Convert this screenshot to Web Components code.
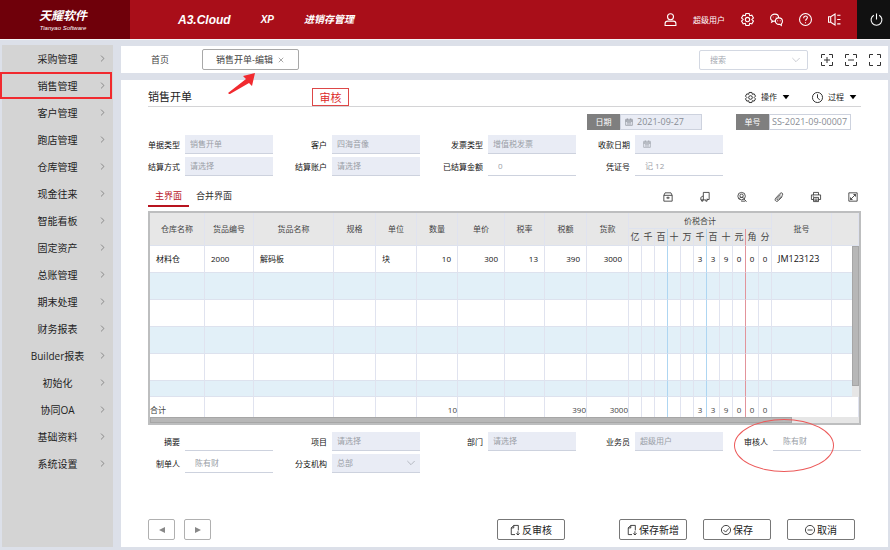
<!DOCTYPE html>
<html lang="zh-CN">
<head>
<meta charset="utf-8">
<title>销售开单</title>
<style>
  html, body {
    margin: 0;
    padding: 0;
  }

  body {
    background: #dce0e9;
    color: #222222;
    font-family: 'Open Sans', 'Noto Sans CJK SC', sans-serif;
    font-size: 8px;
    line-height: 12px;
  }
</style>
</head>
<body>
<erp-app></erp-app>

<script>
const ICONS = {
  user: '<circle cx="12" cy="7" r="5.5"/><path d="M2 23v-3c0-3 2-5 5-5h10c3 0 5 2 5 5v3z"/>',
  gear: '<path d="M9 1h6l1 4 4-1 3 5-3 3 3 3-3 5-4-1-1 4H9l-1-4-4 1-3-5 3-3-3-3 3-5 4 1z"/><circle cx="12" cy="12" r="4"/>',
  chat: '<path d="M16 9C16 5 13 2 9 2S1 5 1 9c0 2 1 4 3 5l-1 3 4-2h3"/><path d="M23 15c0-4-3-6-7-6s-6 3-6 6 3 6 6 6h2l3 2v-3c1-1 2-3 2-5z"/><path d="M6 7v1M11 7v1M14 14v1M19 14v1"/>',
  help: '<circle cx="12" cy="12" r="11"/><path d="M8.500 9.500c0-5 7-5 7-1 0 3-3.500 3-3.500 6M12 17v2"/>',
  horn: '<path d="M1 7h4l8-5v20l-8-5H1zM5 7v10M17 4h6M17 12h6M17 20h6"/>',
  power: '<path d="M7 4a10 10 0 1 0 10 0M12 1v11"/>',
  plusBox: '<path d="M1 8V1h7M16 1h7v7M23 16v7h-7M8 23H1v-7M6 12h12M12 6v12"/>',
  minusBox: '<path d="M1 8V1h7M16 1h7v7M23 16v7h-7M8 23H1v-7M6 12h12"/>',
  fullBox: '<path d="M1 8V1h7M16 1h7v7M23 16v7h-7M8 23H1v-7"/>',
  clock: '<circle cx="12" cy="12" r="11"/><path d="M12 5v8l5 4"/>',
  caret: '<path d="M2 6h20L12 19z" fill="currentColor" stroke="none"/>',
  right: '<path d="M7 2l10 10L7 22"/>',
  down: '<path d="M1 6l11 11L23 6"/>',
  close: '<path d="M3 3l18 18M21 3L3 21"/>',
  calendar: '<path d="M2 4h20v18H2zM2 8h20M2 10h20M7 1v5M17 1v5M6 14h12M6 18h12"/>',
  box: '<path d="M2 8h20v14H2zM2 8l3-6h14l3 6M8 14h8M12 11v6"/>',
  sheet: '<path d="M8 1h14v17h-5M8 1v8l-6 4v6h12M8 9v10M4 19v3h3v-3M14 19v3h3v-6"/>',
  search: '<circle cx="11" cy="10" r="9"/><circle cx="11" cy="9" r="4"/><path d="M5 16c2-4 10-4 12 0M17 17l6 6M10 22h10"/>',
  clip: '<path d="M20 11L10 21c-4 4-10-1-6-6L15 3c3-3 8 1 5 5L10 18c-2 2-4 0-3-2l9-10"/>',
  printer: '<path d="M6 7V1h12v6M6 18H1V7h22v11h-5M6 13h12v10H6zM8 17h8M8 20h8M4 10h3"/>',
  expand: '<path d="M2 2h20v20H2zM13 6h5v5M18 6L6 18M6 13v5h5"/>',
  addPage: '<path d="M12 23H3V7l6-6h11v12M9 1v6H3M19 15v9M15 20l4 4 4-4"/>',
  check: '<circle cx="12" cy="12" r="11"/><path d="M6 12l5 5 8-9"/>',
  minus: '<circle cx="12" cy="12" r="11"/><path d="M6 12h12"/>',
  prev: '<path d="M21 3v18L3 12z" fill="currentColor" stroke="none"/>',
  next: '<path d="M3 3v18l18-9z" fill="currentColor" stroke="none"/>'
};

// Shared base
// Clones markup into an open root
class ErpElement extends HTMLElement {
  constructor() {
    super();
    const template = document.createElement( 'template' );
    template.innerHTML = this.markup();
    this.attachShadow( {mode: 'open'} );
    this.shadowRoot.appendChild( template.content.cloneNode( true ) );
  }

  markup() {
    return '<slot></slot>';
  }
}

class ErpIcon extends ErpElement {
  markup() {
    return /* template */ `
      <style>
        :host {
          display: block;
          flex: none;
          height: var( --icon-size, 12px );
          width: var( --icon-size, 12px );
        }

        svg {
          display: block;
          fill: none;
          height: 100%;
          overflow: visible;
          stroke: currentColor;
          stroke-width: 2;
          width: 100%;
        }
      </style>
      <svg viewBox="0 0 24 24" aria-hidden="true"></svg>
    `;
  }

  connectedCallback() {
    this.shadowRoot.querySelector( 'svg' ).innerHTML = ICONS[this.getAttribute( 'name' )] || '';
  }
}

class ErpHeader extends ErpElement {
  markup() {
    return /* template */ `
      <style>
        :host {
          background: #a90e19;
          border-bottom: solid 1px #f4f4f6;
          color: #ffffff;
          display: flex;
          height: 39px;
        }

        .logo {
          align-items: center;
          background: #6f000a;
          box-sizing: border-box;
          display: flex;
          flex: none;
          flex-direction: column;
          font-style: italic;
          justify-content: center;
          padding-right: 4px;
          width: 130px;
        }

        .logo strong {
          font-size: 12px;
          line-height: 16px;
        }

        .logo small {
          font-family: 'Liberation Sans', sans-serif;
          font-size: 6px;
          line-height: 8px;
        }

        nav {
          align-items: center;
          display: flex;
          flex: 1;
          font-family: 'Liberation Sans', 'Noto Sans CJK SC', sans-serif;
          gap: 30px;
          padding-left: 48px;
        }

        a {
          color: inherit;
          font-size: 10px;
          font-style: italic;
          font-weight: 700;
          text-decoration: none;
        }

        a.brand {
          font-size: 12px;
        }

        .tools {
          --icon-size: 13px;
          align-items: center;
          display: flex;
          gap: 16px;
        }

        button {
          background: none;
          border: none;
          color: inherit;
          padding: 0;
        }

        .power {
          align-items: center;
          background: #111111;
          box-sizing: border-box;
          display: flex;
          height: 39px;
          justify-content: center;
          padding-left: 6px;
          width: 33px;
        }
      </style>
      <div class="logo"><strong>天耀软件</strong><small>Tianyao Software</small></div>
      <nav>
        <a class="brand" href="#">A3.Cloud</a>
        <a href="#">XP</a>
        <a href="#">进销存管理</a>
      </nav>
      <div class="tools">
        <erp-icon name="user"></erp-icon>
        <span>超级用户</span>
        <button aria-label="设置"><erp-icon name="gear"></erp-icon></button>
        <button aria-label="消息"><erp-icon name="chat"></erp-icon></button>
        <button aria-label="帮助"><erp-icon name="help"></erp-icon></button>
        <button aria-label="公告"><erp-icon name="horn"></erp-icon></button>
        <button class="power" aria-label="退出"><erp-icon name="power"></erp-icon></button>
      </div>
    `;
  }
}

class ErpMenu extends ErpElement {
  markup() {
    const items = [
      '采购管理', '销售管理', '客户管理', '跑店管理', '仓库管理', '现金往来', '智能看板', '固定资产',
      '总账管理', '期末处理', '财务报表', 'Builder报表', '初始化', '协同OA', '基础资料', '系统设置'
    ];

    return /* template */ `
      <style>
        :host {
          background: #d4d4d4;
          display: block;
          flex: none;
          width: 111px;
        }

        a {
          align-items: center;
          color: #222222;
          display: flex;
          font-size: 10px;
          height: 27px;
          position: relative;
          text-decoration: none;
        }

        span {
          flex: 1;
          padding-left: 14px;
          text-align: center;
        }

        erp-icon {
          --icon-size: 7px;
          color: #555555;
          margin-right: 7px;
        }

        /* Hand-drawn style marker round the current module */
        a.marked::after {
          border: solid 2px #f12a2f;
          content: '';
          inset: 0 1px 0 -2px;
          position: absolute;
        }
      </style>
      <nav>
        ${items.map( ( item ) => `<a href="#"${item === '销售管理' ? ' class="marked"' : ''}><span>${item}</span><erp-icon name="right"></erp-icon></a>` ).join( '' )}
      </nav>
    `;
  }
}

class ErpTabs extends ErpElement {
  markup() {
    return /* template */ `
      <style>
        :host {
          align-items: center;
          background: #ffffff;
          box-sizing: border-box;
          color: #444444;
          display: flex;
          font-size: 9px;
          height: 27px;
          padding: 0 7px 0 30px;
        }

        a {
          color: inherit;
          text-decoration: none;
        }

        .tab {
          align-items: center;
          border: solid 1px #a8a8a8;
          border-radius: 2px;
          box-sizing: border-box;
          display: flex;
          gap: 5px;
          height: 21px;
          margin-left: 33px;
          padding: 0 14px 0 13px;
          position: relative;
        }

        button {
          --icon-size: 6px;
          background: none;
          border: none;
          color: #555555;
          padding: 0;
        }

        .arrow {
          fill: #f12a2f;
          height: 22px;
          left: 25px;
          position: absolute;
          top: 22px;
          width: 28px;
        }

        .search {
          align-items: center;
          border: solid 1px #d3d8e2;
          border-radius: 2px;
          box-sizing: border-box;
          color: #b0b4bc;
          display: flex;
          height: 20px;
          margin: 0 13px 0 auto;
          padding: 0 7px 0 10px;
          width: 109px;
        }

        .search erp-icon {
          --icon-size: 8px;
        }

        input {
          background: none;
          border: none;
          color: #777777;
          flex: 1;
          font: inherit;
          font-size: 8px;
          min-width: 0;
          padding: 0;
        }

        input::placeholder {
          color: #a4a8b0;
        }

        .view {
          color: #333333;
          display: flex;
          gap: 12px;
        }

        .view button {
          --icon-size: 12px;
          color: inherit;
        }
      </style>
      <a href="#">首页</a>
      <div class="tab">
        <a href="#">销售开单-编辑</a>
        <button aria-label="关闭"><erp-icon name="close"></erp-icon></button>
        <svg class="arrow" viewBox="0 0 28 22" aria-hidden="true"><path d="M27 1L15 4l3 3L0 21c1 1 1 1 2 1l19-11 3 3z"/></svg>
      </div>
      <div class="search"><input placeholder="搜索" aria-label="搜索"><erp-icon name="down"></erp-icon></div>
      <div class="view">
        <button aria-label="放大"><erp-icon name="plusBox"></erp-icon></button>
        <button aria-label="缩小"><erp-icon name="minusBox"></erp-icon></button>
        <button aria-label="全屏"><erp-icon name="fullBox"></erp-icon></button>
      </div>
    `;
  }
}

// label, value, hint: texts
// plain: white box with underline only
// tag: grey label block with full border
// icon: leading glyph
// choice: drop-down
class ErpField extends ErpElement {
  markup() {
    return /* template */ `
      <style>
        :host {
          align-items: center;
          display: flex;
          justify-content: flex-end;
        }

        label {
          color: #111111;
          padding-right: 5px;
          white-space: nowrap;
        }

        .box {
          align-items: center;
          background: #e9ecf5;
          border-bottom: solid 1px #cdd2de;
          box-sizing: border-box;
          color: #9a9ea6;
          display: flex;
          flex: none;
          gap: 4px;
          height: 19px;
          padding: 0 5px;
          width: 88px;
        }

        .box erp-icon {
          --icon-size: 8px;
        }

        input, select {
          appearance: none;
          background: none;
          border: none;
          color: inherit;
          flex: 1;
          font: inherit;
          margin: 0;
          min-width: 0;
          opacity: 1;
          outline: none;
          padding: 0;
        }

        input::placeholder {
          color: inherit;
        }

        :host( [plain] ) .box {
          background: #ffffff;
          padding: 0 10px;
        }

        :host( [icon] ) .box {
          padding-left: 8px;
        }

        :host( [tag] ) label {
          background: #7f7f7f;
          color: #ffffff;
          line-height: 16px;
          padding: 0;
          text-align: center;
          width: 33px;
        }

        :host( [tag] ) .box {
          border: solid 1px #cdd2de;
          color: #888c94;
          font-size: 9px;
          height: 16px;
          padding: 0 4px;
          width: 82px;
        }

        :host( [tag][plain] ) .box {
          padding: 0 2px;
        }
      </style>
      <label for="control"></label>
      <div class="box"></div>
    `;
  }

  connectedCallback() {
    const value = this.getAttribute( 'value' ) || '';
    const hint = this.getAttribute( 'hint' ) || '';
    const icon = this.getAttribute( 'icon' );
    const box = this.shadowRoot.querySelector( '.box' );

    this.shadowRoot.querySelector( 'label' ).textContent = this.getAttribute( 'label' );

    if( this.hasAttribute( 'choice' ) ) {
      box.innerHTML = `<select id="control"><option>${value}</option></select><erp-icon name="down"></erp-icon>`;
    } else {
      box.innerHTML = `${icon ? `<erp-icon name="${icon}"></erp-icon>` : ''}<input id="control" value="${value}" placeholder="${hint}">`;
    }
  }
}

class ErpButton extends ErpElement {
  markup() {
    return /* template */ `
      <style>
        :host {
          display: block;
        }

        button {
          --icon-size: 10px;
          align-items: center;
          background: #ffffff;
          border: solid 1px #777777;
          border-radius: 2px;
          color: #222222;
          display: flex;
          font: inherit;
          font-size: 10px;
          gap: 2px;
          height: 21px;
          justify-content: center;
          padding: 0;
          width: 68px;
        }

        :host( [small] ) button {
          --icon-size: 8px;
          border-color: #b0b0b0;
          color: #888888;
          width: 27px;
        }
      </style>
      <button><slot></slot></button>
    `;
  }
}

class ErpGrid extends ErpElement {
  markup() {
    const widths = [55, 49, 80, 42, 41, 41, 47, 40, 42, 42];
    const heads = ['仓库名称', '货品编号', '货品名称', '规格', '单位', '数量', '单价', '税率', '税额', '货款'];
    const units = ['亿', '千', '百', '十', '万', '千', '百', '十', '元', '角', '分'];
    const amount = ['', '', '', '', '', '3', '3', '9', '0', '0', '0'];

    // Amount cells carry the ruled colours of a ledger
    const rule = ( index ) => index === 2 || index === 5 ? 'digit blue' : index === 8 ? 'digit red' : 'digit';
    const digits = ( values, tag = 'td' ) => values.map( ( value, index ) => `<${tag} class="${rule( index )}">${value}</${tag}>` ).join( '' );
    const row = ( values, sums, lot ) => `<tr>${values.map( ( value, index ) => `<td${index > 4 ? ' class="num"' : ''}>${value}</td>` ).join( '' )}${digits( sums )}<td class="lot">${lot}</td><td></td></tr>`;
    const blank = row( Array( 10 ).fill( '' ), Array( 11 ).fill( '' ), '' );

    return /* template */ `
      <style>
        :host {
          border: solid 2px #bdbebf;
          display: block;
          position: relative;
        }

        table {
          border-collapse: separate;
          border-spacing: 0;
          table-layout: fixed;
          width: 100%;
        }

        th, td {
          border-bottom: solid 1px #dde2ee;
          border-right: solid 1px #e0e3ef;
          box-sizing: border-box;
          font-weight: 400;
          padding: 0;
          white-space: nowrap;
        }

        th {
          background: #e7e7e7;
          color: #444444;
          height: 17px;
        }

        tr:first-child th {
          height: 16px;
        }

        th.digit {
          font-size: 9px;
        }

        td {
          color: #111111;
          height: 27px;
          padding: 0 6px;
        }

        td.num {
          text-align: right;
        }

        td.digit {
          padding: 0;
          text-align: center;
        }

        td.lot {
          font-size: 9px;
        }

        th.blue, td.blue {
          border-right-color: #aed6f2;
        }

        th.red, td.red {
          border-right-color: #e2949b;
        }

        tbody tr:nth-child( even ) td {
          background: #e2f0f8;
        }

        tbody tr:last-child td {
          height: 16px;
        }

        tfoot td {
          border-bottom: none;
          color: #444444;
          height: 20px;
          padding: 6px 0 0 0;
        }

        tfoot td.digit {
          padding: 6px 0 0 0;
        }

        .across {
          background: #e6e6e6;
          height: 6px;
        }

        .across div {
          background: #b7b7b7;
          border: solid 1px #a6a6a6;
          box-sizing: border-box;
          height: 6px;
          width: 90.500%;
        }

        .down {
          background: #e6e6e6;
          height: 151px;
          position: absolute;
          right: 0;
          top: 33px;
          width: 7px;
        }

        .down div {
          background: #b7b7b7;
          border: solid 1px #a6a6a6;
          box-sizing: border-box;
          height: 140px;
        }
      </style>
      <table>
        <colgroup>
          ${widths.map( ( width ) => `<col style="width: ${width}px">` ).join( '' )}
          ${units.map( () => '<col style="width: 13px">' ).join( '' )}
          <col style="width: 60px"><col>
        </colgroup>
        <thead>
          <tr>${heads.map( ( head ) => `<th rowspan="2">${head}</th>` ).join( '' )}<th colspan="11">价税合计</th><th rowspan="2">批号</th><th rowspan="2"></th></tr>
          <tr>${digits( units, 'th' )}</tr>
        </thead>
        <tbody>
          ${row( ['材料仓', '2000', '解码板', '', '块', '10', '300', '13', '390', '3000'], amount, 'JM123123' )}
          ${blank.repeat( 5 )}
        </tbody>
        <tfoot>
          ${row( ['合计', '', '', '', '', '10', '', '', '390', '3000'], amount, '' )}
        </tfoot>
      </table>
      <div class="across"><div></div></div>
      <div class="down"><div></div></div>
    `;
  }
}

class ErpSheet extends ErpElement {
  markup() {
    return /* template */ `
      <style>
        :host {
          background: #ffffff;
          box-sizing: border-box;
          display: flex;
          flex: 1;
          flex-direction: column;
          padding: 8px 27px 7px 27px;
        }

        button {
          background: none;
          border: none;
          color: #333333;
          font: inherit;
          padding: 0;
        }

        .title {
          align-items: center;
          border-bottom: solid 1px #d4d4d6;
          display: flex;
          height: 18px;
        }

        h1 {
          font-size: 11px;
          font-weight: 400;
          margin: 0;
          width: 164px;
        }

        .state {
          border: solid 1px #dd4747;
          box-sizing: border-box;
          color: #dd2a2a;
          font-size: 11px;
          height: 18px;
          line-height: 18px;
          text-align: center;
          width: 37px;
        }

        .actions {
          display: flex;
          gap: 22px;
          margin-left: auto;
          padding-right: 4px;
        }

        .actions button {
          --icon-size: 11px;
          align-items: center;
          color: #222222;
          display: flex;
          gap: 5px;
        }

        .actions .caret {
          --icon-size: 8px;
          color: #000000;
        }

        .numbers {
          display: flex;
          gap: 34px;
          justify-content: flex-end;
          margin-top: 7px;
          padding-right: 10px;
        }

        .fields {
          display: grid;
          gap: 3px 0;
          grid-template-columns: 125fr 147fr 156fr 147fr 138fr;
          margin-top: 5px;
        }

        .views {
          display: flex;
          height: 20px;
          margin: 11px 0 4px 0;
        }

        .views > button {
          border-bottom: solid 2px transparent;
          font-size: 9px;
          padding: 0 7px;
        }

        .views > button.on {
          border-color: #b8141f;
          color: #b8141f;
        }

        .icons {
          --icon-size: 10px;
          align-items: center;
          display: flex;
          gap: 27px;
          margin-left: auto;
          padding-right: 3px;
        }

        .foot {
          margin-top: 7px;
        }

        .signed {
          position: relative;
        }

        /* Marker round the reviewer */
        .signed::after {
          border: solid 1px #ec5a5a;
          border-radius: 50%;
          box-sizing: border-box;
          content: '';
          height: 53px;
          left: 11px;
          pointer-events: none;
          position: absolute;
          top: -13px;
          width: 100px;
        }

        .bar {
          display: flex;
          gap: 16px;
          margin-top: auto;
          padding-right: 6px;
        }

        .pager {
          display: flex;
          flex: 1;
          gap: 9px;
        }

        .first {
          margin-right: 38px;
        }
      </style>
      <div class="title">
        <h1>销售开单</h1>
        <div class="state">审核</div>
        <div class="actions">
          <button><erp-icon name="gear"></erp-icon>操作<erp-icon class="caret" name="caret"></erp-icon></button>
          <button><erp-icon name="clock"></erp-icon>过程<erp-icon class="caret" name="caret"></erp-icon></button>
        </div>
      </div>
      <div class="numbers">
        <erp-field tag label="日期" value="2021-09-27" icon="calendar"></erp-field>
        <erp-field tag plain label="单号" value="SS-2021-09-00007"></erp-field>
      </div>
      <div class="fields">
        <erp-field label="单据类型" value="销售开单"></erp-field>
        <erp-field label="客户" value="四海音像"></erp-field>
        <erp-field label="发票类型" value="增值税发票"></erp-field>
        <erp-field label="收款日期" icon="calendar"></erp-field>
        <span></span>
        <erp-field label="结算方式" hint="请选择"></erp-field>
        <erp-field label="结算账户" hint="请选择"></erp-field>
        <erp-field plain label="已结算金额" value="0"></erp-field>
        <erp-field plain label="凭证号" value="记 12"></erp-field>
      </div>
      <div class="views">
        <button class="on">主界面</button>
        <button>合并界面</button>
        <div class="icons">
          <button aria-label="归档"><erp-icon name="box"></erp-icon></button>
          <button aria-label="单据"><erp-icon name="sheet"></erp-icon></button>
          <button aria-label="查询"><erp-icon name="search"></erp-icon></button>
          <button aria-label="附件"><erp-icon name="clip"></erp-icon></button>
          <button aria-label="打印"><erp-icon name="printer"></erp-icon></button>
          <button aria-label="展开"><erp-icon name="expand"></erp-icon></button>
        </div>
      </div>
      <erp-grid></erp-grid>
      <div class="fields foot">
        <erp-field plain label="摘要"></erp-field>
        <erp-field label="项目" hint="请选择"></erp-field>
        <erp-field label="部门" hint="请选择"></erp-field>
        <erp-field label="业务员" value="超级用户"></erp-field>
        <erp-field class="signed" plain label="审核人" value="陈有财"></erp-field>
        <erp-field plain label="制单人" value="陈有财"></erp-field>
        <erp-field choice label="分支机构" value="总部"></erp-field>
      </div>
      <div class="bar">
        <div class="pager">
          <erp-button small><erp-icon name="prev"></erp-icon></erp-button>
          <erp-button small><erp-icon name="next"></erp-icon></erp-button>
        </div>
        <erp-button class="first"><erp-icon name="addPage"></erp-icon>反审核</erp-button>
        <erp-button><erp-icon name="addPage"></erp-icon>保存新增</erp-button>
        <erp-button><erp-icon name="check"></erp-icon>保存</erp-button>
        <erp-button><erp-icon name="minus"></erp-icon>取消</erp-button>
      </div>
    `;
  }
}

class ErpApp extends ErpElement {
  markup() {
    return /* template */ `
      <style>
        :host {
          display: flex;
          flex-direction: column;
          min-height: 100vh;
        }

        .body {
          display: flex;
          flex: 1;
          gap: 8px;
          padding: 5px 2px 3px 2px;
        }

        main {
          display: flex;
          flex: 1;
          flex-direction: column;
          gap: 7px;
          min-width: 0;
          padding-top: 1px;
        }
      </style>
      <erp-header></erp-header>
      <div class="body">
        <erp-menu></erp-menu>
        <main>
          <erp-tabs></erp-tabs>
          <erp-sheet></erp-sheet>
        </main>
      </div>
    `;
  }
}

window.customElements.define( 'erp-icon', ErpIcon );
window.customElements.define( 'erp-button', ErpButton );
window.customElements.define( 'erp-field', ErpField );
window.customElements.define( 'erp-grid', ErpGrid );
window.customElements.define( 'erp-header', ErpHeader );
window.customElements.define( 'erp-menu', ErpMenu );
window.customElements.define( 'erp-tabs', ErpTabs );
window.customElements.define( 'erp-sheet', ErpSheet );
window.customElements.define( 'erp-app', ErpApp );
</script>
</body>
</html>
